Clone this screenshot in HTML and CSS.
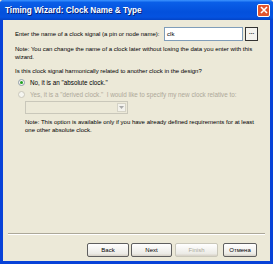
FILE: index.html
```html
<!DOCTYPE html>
<html lang="en">
<head>
  <meta charset="UTF-8">
  <title>Timing Wizard: Clock Name &amp; Type</title>
  <link rel="stylesheet" href="styles.css">
</head>
<body>
  <div class="window">
    <div class="titlebar">
      <span class="title">Timing Wizard: Clock Name &amp; Type</span>
      <span class="close">
        <svg width="8" height="8" viewBox="0 0 8 8"><path d="M1 1L7 7M7 1L1 7" stroke="#fff" stroke-width="1.6"/></svg>
      </span>
    </div>

    <div class="content">
      <div class="name-row">
        <span class="label">Enter the name of a clock signal (a pin or node name):</span>
        <span class="textbox">clk</span>
        <span class="browse">...</span>
      </div>
      <p class="note">Note: You can change the name of a clock later without losing the data you enter with this wizard.</p>

      <p class="question">Is this clock signal harmonically related to another clock in the design?</p>
      <div class="radio-row">
        <span class="radio checked"></span>
        <span>No, it is an "absolute clock."</span>
      </div>
      <div class="radio-row disabled">
        <span class="radio"></span>
        <span>Yes, it is a "derived clock."&nbsp; I would like to specify my new clock relative to:</span>
      </div>
      <div class="combo">
        <span class="combo-arrow">
          <svg width="5" height="3" viewBox="0 0 5 3"><path d="M0 0H5L2.5 3Z" fill="#aaa"/></svg>
        </span>
      </div>
      <p class="note sub">Note: This option is available only if you have already defined requirements for at least one other absolute clock.</p>
    </div>

    <div class="footer">
      <div class="separator"></div>
      <div class="buttons">
        <span class="btn">Back</span>
        <span class="btn next">Next</span>
        <span class="btn off">Finish</span>
        <span class="btn cancel">Отмена</span>
      </div>
    </div>
  </div>
</body>
</html>
```

FILE: styles.css
```css
* {
  margin: 0;
  padding: 0;
  box-sizing: border-box;
}

body {
  font-family: 'Liberation Sans', Arial, sans-serif;
  font-size: 6px;
  color: #000;
  background: #ECE9D8;
}

.window {
  width: 273px;
  height: 264px;
  display: flex;
  flex-direction: column;
  background: #0842D8;
  padding: 0 3px 3px;
  border-radius: 4px 4px 0 0;
}

.titlebar {
  height: 20px;
  flex: none;
  display: flex;
  align-items: center;
  justify-content: space-between;
  margin: 0 -3px;
  padding: 0 3px 0 5px;
  background: linear-gradient(180deg, #3D95FF 0%, #0A5FE8 12%, #0350DC 60%, #0553E0 85%, #0343C7 100%);
  border-radius: 4px 4px 0 0;
}

.title {
  color: #fff;
  font-weight: bold;
  font-size: 8.2px;
  text-shadow: 1px 1px 0 #0A1E70;
}

.close {
  width: 13px;
  height: 13px;
  display: flex;
  align-items: center;
  justify-content: center;
  background: #E2542E;
  border: 1px solid #fff;
  border-radius: 2px;
}

.content {
  flex: 1;
  background: #ECE9D8;
  padding: 7px 12px 0 12px;
}

.name-row {
  display: flex;
  align-items: center;
}

.label {
  white-space: nowrap;
  width: 151px;
}

.textbox {
  width: 80px;
  height: 14px;
  background: #fff;
  border: 1px solid #7F9DB9;
  padding: 1px 2px;
  line-height: 10px;
}

.browse {
  width: 13px;
  height: 14px;
  margin-left: 2px;
  border: 1px solid #333;
  background: #F4F3EE;
  text-align: center;
  line-height: 9px;
  font-weight: bold;
  font-size: 6px;
}

.note {
  margin-top: 4px;
  line-height: 8px;
}

.question {
  margin-top: 6px;
  line-height: 8px;
}

.radio-row {
  display: flex;
  align-items: center;
  gap: 5px;
  margin-top: 3px;
  padding-left: 3px;
  height: 8px;
  font-size: 6.3px;
}

.radio-row.disabled {
  color: #ACA899;
  margin-top: 4px;
}

.radio {
  width: 7px;
  height: 7px;
  border-radius: 50%;
  border: 1px solid #8F9DA8;
  background: #F5F5F0;
  display: flex;
  align-items: center;
  justify-content: center;
}

.radio.checked::after {
  content: '';
  width: 3px;
  height: 3px;
  border-radius: 50%;
  background: #21A121;
}

.radio-row.disabled .radio {
  border-color: #CAC8BB;
}

.combo {
  width: 103px;
  height: 13px;
  margin: 3px 0 0 10px;
  border: 1px solid #C9C7BA;
  background: #ECE9D8;
  display: flex;
  justify-content: flex-end;
  align-items: center;
  padding-right: 1px;
}

.combo-arrow {
  width: 9px;
  height: 9px;
  display: flex;
  align-items: center;
  justify-content: center;
  background: #F3F2EC;
  border: 1px solid #D5D3C6;
}

.note.sub {
  margin: 4px 0 0 10px;
}

.footer {
  flex: none;
  background: #ECE9D8;
  padding: 0 5px 4px;
}

.separator {
  height: 2px;
  border-top: 1px solid #ACA899;
  border-bottom: 1px solid #fff;
}

.buttons {
  display: flex;
  justify-content: flex-end;
  margin-top: 8px;
  padding-right: 8px;
}

.btn {
  width: 42px;
  height: 14px;
  border: 1px solid #5F5F5F;
  border-radius: 2px;
  background: linear-gradient(180deg, #FFFFFF, #ECEBE6 80%, #D6D0C5);
  text-align: center;
  line-height: 12px;
  font-size: 6px;
}

.btn.next {
  width: 41px;
  margin-left: 2px;
}

.btn.off {
  width: 43px;
  margin-left: 3px;
  color: #ACA899;
  border-color: #C9C7BA;
}

.btn.cancel {
  width: 34px;
  margin-left: 5px;
}
```
